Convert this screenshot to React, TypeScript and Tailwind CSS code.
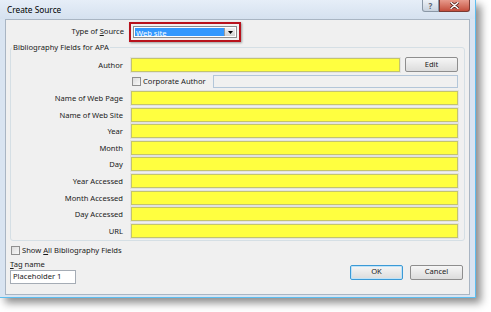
import React from 'react';

const FIELDS = [
  'Name of Web Page',
  'Name of Web Site',
  'Year',
  'Month',
  'Day',
  'Year Accessed',
  'Month Accessed',
  'Day Accessed',
  'URL',
];

const YellowField: React.FC = () => (
  <div className="h-[14px] flex-1 bg-[#ffff40] border border-[#c4c46c] shadow-[0_0_0_1px_#e2e2e2]" />
);

const Label: React.FC<{ children: React.ReactNode }> = ({ children }) => (
  <div className="w-[113px] shrink-0 text-right pr-[1px] leading-[14px]">{children}</div>
);

const Button: React.FC<{ label: string; primary?: boolean }> = ({ label, primary }) => (
  <div
    className={
      'w-[53px] h-[15px] flex items-center justify-center rounded-[2px] bg-gradient-to-b from-[#f6f6f6] to-[#dcdcdc] leading-none ' +
      (primary ? 'border border-[#3c9ad6] shadow-[inset_0_0_0_1px_#bfe3f8]' : 'border border-[#8e8e8e]')
    }
  >
    {label}
  </div>
);

const Checkbox: React.FC = () => (
  <div className="w-[9px] h-[9px] border border-[#8f8f8f] bg-gradient-to-br from-[#dcdcdc] to-[#f8f8f8] shrink-0" />
);

const App: React.FC = () => {
  return (
    <div className="w-[491px] h-[312px] bg-white overflow-hidden text-[7.6px] text-[#1a1a1a] font-['Noto_Sans',sans-serif]">
      <div className="w-[476px] h-[298px] flex flex-col bg-[#d9e4f1] border-r border-b border-[#5cbdef] shadow-[5px_5px_8px_rgba(0,0,0,0.45)]">
        {/* title bar */}
        <div className="h-[19px] flex items-start bg-gradient-to-b from-[#e6eef8] to-[#d5e1ef] pl-[7px]">
          <span className="mt-[4px] text-[8.3px] text-black leading-[11px]">Create Source</span>
          <div className="ml-auto flex mr-[5px]">
            <div className="w-[17px] h-[12px] flex items-center justify-center border border-[#8a97a6] border-t-0 rounded-bl-[3px] bg-gradient-to-b from-[#eef2f7] to-[#c8d2de] text-[8px] font-bold text-[#5a6470] leading-none">
              ?
            </div>
            <div className="w-[31px] h-[12px] flex items-center justify-center border border-[#7b3a34] border-t-0 rounded-br-[3px] bg-gradient-to-b from-[#e79a8c] to-[#c34d3c]">
              <svg width="9" height="7" viewBox="0 0 9 7">
                <path d="M1 0.5 L8 6.5 M8 0.5 L1 6.5" stroke="#5a2620" strokeWidth="3" strokeLinecap="round" />
                <path d="M1 0.5 L8 6.5 M8 0.5 L1 6.5" stroke="#ffffff" strokeWidth="1.4" strokeLinecap="round" />
              </svg>
            </div>
          </div>
        </div>

        {/* client area */}
        <div className="flex-1 mx-[5px] mb-[2px] bg-[#f0f0f0] border border-[#a9b5c3] px-[4px] flex flex-col">
          {/* type of source */}
          <div className="flex items-center h-[20px] mt-[2px]">
            <div className="w-[114px] text-right">
              Type of <span className="underline">S</span>ource
            </div>
            <div className="ml-[5px] w-[112px] h-[20px] border-2 border-[#b8121c] shadow-[1px_1px_2px_rgba(0,0,0,0.35)] flex items-center px-[2px]">
              <div className="flex-1 h-[12px] border border-[#8c8c8c] bg-white flex p-[1px]">
                <div className="flex-1 bg-[#3399ff] text-white leading-[10px] pl-[1px]">Web site</div>
                <div className="w-[11px] bg-gradient-to-b from-[#f2f2f2] to-[#d2d2d2] border-l border-[#9a9a9a] flex items-center justify-center">
                  <svg width="5" height="3" viewBox="0 0 5 3">
                    <path d="M0 0 H5 L2.5 3 Z" fill="#000" />
                  </svg>
                </div>
              </div>
            </div>
          </div>

          {/* group box */}
          <fieldset className="w-[455px] border border-[#d5dfe5] rounded-[3px] pr-[6px] pb-[2px]">
            <legend className="ml-[1px] px-[1px] leading-[11px]">Bibliography Fields for APA</legend>

            <div className="flex items-center mt-[4px]">
              <Label>Author</Label>
              <div className="ml-[7px] flex-1 flex items-center">
                <YellowField />
                <div className="ml-[5px]">
                  <Button label="Edit" />
                </div>
              </div>
            </div>

            <div className="flex items-center mt-[3px] h-[13px]">
              <div className="w-[113px] shrink-0" />
              <div className="ml-[8px] flex items-center">
                <Checkbox />
                <span className="ml-[2px] leading-[13px]">Corporate Author</span>
              </div>
              <div className="ml-auto w-[245px] h-[13px] border border-[#b3c6d9] bg-[#f0f0f0]" />
            </div>

            <div className="flex flex-col gap-[2.6px] mt-[3px]">
              {FIELDS.map((f) => (
                <div key={f} className="flex items-center">
                  <Label>{f}</Label>
                  <div className="ml-[7px] flex-1 flex">
                    <YellowField />
                  </div>
                </div>
              ))}
            </div>
          </fieldset>

          {/* bottom */}
          <div className="flex justify-between mr-[2px]">
            <div className="flex flex-col">
              <div className="flex items-center mt-[5px] h-[10px] ml-[1px]">
                <Checkbox />
                <span className="ml-[2px]">
                  Show <span className="underline">A</span>ll Bibliography Fields
                </span>
              </div>
              <div className="mt-[3px] leading-[11px]">
                <span className="underline">T</span>ag name
              </div>
              <div className="w-[66px] h-[14px] border border-[#a5acb5] bg-white flex items-center pl-[2px] leading-none">
                Placeholder 1
              </div>
            </div>
            <div className="flex gap-[7px] mt-[24px]">
              <Button label="OK" primary />
              <Button label="Cancel" />
            </div>
          </div>
        </div>
      </div>
    </div>
  );
};

export default App;
